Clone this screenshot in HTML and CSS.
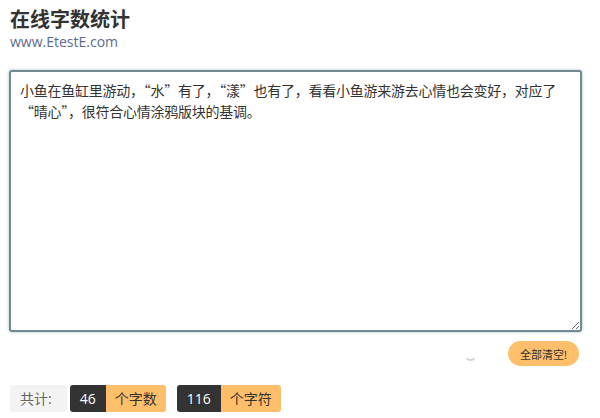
FILE: index.html
```html
<!DOCTYPE html>
<html lang="zh-CN">
<head>
    <meta charset="UTF-8">
    <title>在线字数统计</title>
    <link rel="stylesheet" href="styles.css">
</head>
<body>
    <div class="header">
        <h1>在线字数统计</h1>
        <div class="site">www.EtestE.com</div>
    </div>

    <textarea id="content" class="editor">小鱼在鱼缸里游动，“水”有了，“漾”也有了，看看小鱼游来游去心情也会变好，对应了“晴心”，很符合心情涂鸦版块的基调。</textarea>

    <div class="tools">
        <span class="spinner"></span>
        <button type="button" class="clear-btn">全部清空!</button>
    </div>

    <div class="stats">
        <span class="total">共计:</span>
        <span class="group"><span class="num" id="wordCount">46</span><span class="unit">个字数</span></span>
        <span class="group"><span class="num" id="charCount">116</span><span class="unit">个字符</span></span>
    </div>
</body>
</html>
```

FILE: styles.css
```css
body {
    margin: 0;
    padding: 8px 10px 0 10px;
    font-family: "Open Sans", "Noto Sans CJK SC", sans-serif;
    color: #333;
    background: #fff;
}

.header h1 {
    margin: 0;
    font-size: 20px;
    line-height: 24px;
    font-weight: bold;
    color: #333;
}

.site {
    font-size: 14px;
    line-height: 18px;
    color: #5b6b8c;
    margin-top: 1px;
}

.editor {
    display: block;
    box-sizing: border-box;
    width: 573px;
    height: 262px;
    margin: 19px 0 0 -1px;
    padding: 8px 9px;
    border: 2px solid #6f8a90;
    border-radius: 3px;
    box-shadow: 0 0 3px rgba(80, 110, 115, 0.5);
    font-family: "Noto Sans CJK SC", "Open Sans", sans-serif;
    font-size: 14px;
    line-height: 21px;
    letter-spacing: -0.25px;
    color: #333;
    resize: both;
    outline: none;
}

.tools {
    display: flex;
    justify-content: flex-end;
    align-items: center;
    gap: 31px;
    margin-top: 9px;
    width: 569px;
}

/* 加载中的小圆弧 */
.spinner {
    width: 9px;
    height: 9px;
    border: 2px solid transparent;
    border-bottom-color: #d0d3d6;
    border-radius: 50%;
    margin-top: 2px;
}

.clear-btn {
    height: 25px;
    padding: 0 12px;
    border: none;
    border-radius: 13px;
    background: #ffbe69;
    color: #333;
    font-family: "Open Sans", "Noto Sans CJK SC", sans-serif;
    font-size: 11px;
    cursor: pointer;
}

.stats {
    display: flex;
    gap: 11px;
    margin-top: 19px;
    font-size: 14px;
    line-height: 27px;
}

.total {
    background: #f3f3f3;
    color: #666;
    padding: 0 15px 0 10px;
    border-radius: 3px;
    margin-right: -8px;
}

.group {
    display: flex;
    border-radius: 3px;
    overflow: hidden;
}

.num {
    background: #333;
    color: #fff;
    padding: 0 10px;
}

.unit {
    background: #ffbe69;
    color: #333;
    padding: 0 9px;
}
```
